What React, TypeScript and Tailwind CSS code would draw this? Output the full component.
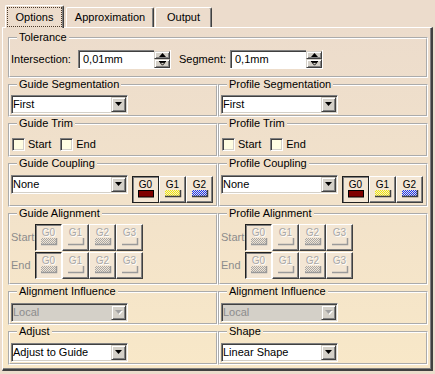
import React from 'react';

type Swatch = 'red' | 'yellow' | 'blue' | 'gray' | 'none';
type Frame = 'raised' | 'pressed' | 'active';

function SwatchIcon({ kind, muted = false }: { kind: Swatch; muted?: boolean }) {
  if (kind === 'red') {
    return (
      <svg width="18" height="8" viewBox="0 0 18 8">
        <rect x="1.5" y="0.5" width="15" height="6.5" fill="#800000" stroke="#000" />
      </svg>
    );
  }
  const dot = kind === 'yellow' ? '#f4ec00' : kind === 'blue' ? '#1030ff' : '#a8a8a8';
  const line = muted ? '#9a9a9a' : '#404040';
  return (
    <svg width="18" height="8" viewBox="0 0 18 8">
      <defs>
        <pattern id={`dots-${kind}`} width="2" height="2" patternUnits="userSpaceOnUse">
          <rect width="1" height="1" fill={dot} />
          <rect x="1" y="1" width="1" height="1" fill={dot} />
        </pattern>
      </defs>
      {kind !== 'none' && <rect x="1" y="0" width="15" height="6" fill={`url(#dots-${kind})`} />}
      <polyline points="16.5,0 16.5,6.5 1,6.5" fill="none" stroke={line} strokeWidth="1.5" />
    </svg>
  );
}

function GButton({ label, kind, frame = 'raised', muted = false }: { label: string; kind: Swatch; frame?: Frame; muted?: boolean }) {
  const frameCls =
    frame === 'active'
      ? 'border-[#202020] shadow-[inset_1px_1px_0_#808080]'
      : frame === 'pressed'
        ? 'border-t-[#202020] border-l-[#202020] border-r-white border-b-white shadow-[inset_1px_1px_0_#808080]'
        : 'border-t-white border-l-white border-r-[#404040] border-b-[#404040] shadow-[inset_-1px_-1px_0_#808080]';
  return (
    <div className={`flex h-[27px] w-[27px] flex-col items-center border bg-[#f3e6d4] pt-[2px] ${frameCls}`}>
      <span className={`text-[10px] leading-[11px] ${muted ? 'text-[#a8a8a8] [text-shadow:1px_1px_0_#fff]' : 'text-black'}`}>
        {label}
      </span>
      <span className="flex">
        <SwatchIcon kind={kind} muted={muted} />
      </span>
    </div>
  );
}

function Combo({ value, disabled = false }: { value: string; disabled?: boolean }) {
  return (
    <div
      className={`flex h-[19px] w-[117px] border border-t-[#808080] border-l-[#808080] border-r-white border-b-white p-[1px] shadow-[inset_1px_1px_0_#404040,inset_-1px_-1px_0_#d4d0c8] ${
        disabled ? 'bg-[#d4d0c8]' : 'bg-white'
      }`}
    >
      <span className={`flex flex-1 items-center ${disabled ? 'text-[#8c8c8c]' : 'text-black'}`}>{value}</span>
      <span className="flex w-[15px] items-center justify-center border border-t-[#d4d0c8] border-l-[#d4d0c8] border-r-[#404040] border-b-[#404040] bg-[#d4d0c8] shadow-[inset_1px_1px_0_white,inset_-1px_-1px_0_#808080]">
        <svg width="8" height="5" viewBox="0 0 8 5">
          {disabled && <polygon points="1,1 8,1 4.5,5" fill="#fff" />}
          <polygon points="0,0 7,0 3.5,4" fill={disabled ? '#a0a0a0' : '#000'} />
        </svg>
      </span>
    </div>
  );
}

function Check({ label }: { label: string }) {
  return (
    <label className="flex items-center gap-[3px]">
      <span className="h-[13px] w-[13px] border border-t-[#808080] border-l-[#808080] border-r-white border-b-white bg-[#fffde2] shadow-[inset_1px_1px_0_#404040,inset_-1px_-1px_0_#d4d0c8]" />
      {label}
    </label>
  );
}

function Spinner() {
  const btn =
    'flex flex-1 items-center justify-center border border-t-[#d4d0c8] border-l-[#d4d0c8] border-r-[#404040] border-b-[#404040] bg-[#d4d0c8] shadow-[inset_1px_1px_0_white,inset_-1px_-1px_0_#808080]';
  return (
    <div className="flex h-[17px] w-[16px] flex-col">
      <span className={btn}>
        <svg width="7" height="4" viewBox="0 0 7 4">
          <polygon points="0,4 7,4 3.5,0" fill="#000" />
        </svg>
      </span>
      <span className={btn}>
        <svg width="7" height="5" viewBox="0 0 7 5">
          <line x1="0" y1="0.5" x2="7" y2="0.5" stroke="#000" />
          <polygon points="1,1.5 6,1.5 3.5,4.2" fill="none" stroke="#000" strokeWidth="0.9" />
        </svg>
      </span>
    </div>
  );
}

function Field({ value }: { value: string }) {
  return (
    <div className="flex h-[19px] items-center border-r border-b border-r-white border-b-white">
      <span className="flex h-full w-[76px] items-center border-t border-l border-t-[#808080] border-l-[#808080] bg-white pl-[4px] shadow-[inset_1px_1px_0_#404040]">
        {value}
      </span>
      <Spinner />
    </div>
  );
}

function Group({ title, className, children }: { title: string; className: string; children: React.ReactNode }) {
  return (
    <fieldset className={`min-w-0 border-2 border-white px-[1px] [border-style:groove] ${className}`}>
      <legend className="ml-[6px] px-[2px] leading-[13px]">{title}</legend>
      {children}
    </fieldset>
  );
}

function AlignRow({ label, className }: { label: string; className?: string }) {
  return (
    <div className={`flex items-center ${className ?? ''}`}>
      <span className="w-[24px] text-[#8c8c8c]">{label}</span>
      <div className="flex">
        <GButton label="G0" kind="gray" frame="pressed" muted />
        <GButton label="G1" kind="none" muted />
        <GButton label="G2" kind="gray" muted />
        <GButton label="G3" kind="none" muted />
      </div>
    </div>
  );
}

export default function App() {
  const sides = ['Guide', 'Profile'] as const;

  return (
    <div className="h-[374px] w-[435px] overflow-hidden bg-[#ecdccc] font-['Liberation_Sans',Arial,sans-serif] text-[11px] leading-[13px] text-black">
      {/* tabs */}
      <div className="flex h-[27px] items-end pl-[5px]">
        <div className="relative z-10 -mb-px flex h-[23px] w-[59px] rounded-t-[2px] border-t border-l border-r border-t-white border-l-white border-r-[#404040] bg-[#ecdccc] p-[1px] shadow-[inset_-1px_0_0_#808080]">
          <div className="flex flex-1 items-center justify-center border border-dotted border-[#4a3a2a] pt-[1px]">Options</div>
        </div>
        <div className="ml-[2px] flex h-[20px] w-[88px] items-center justify-center rounded-t-[2px] border-t border-l border-r border-t-white border-l-white border-r-[#404040] shadow-[inset_-1px_0_0_#808080]">
          Approximation
        </div>
        <div className="ml-[1px] flex h-[20px] w-[57px] items-center justify-center rounded-t-[2px] border-t border-l border-r border-t-white border-l-white border-r-[#404040] shadow-[inset_-1px_0_0_#808080]">
          Output
        </div>
      </div>

      {/* panel */}
      <div className="ml-[2px] w-[431px] border-t border-l border-r-2 border-b-2 border-t-white border-l-white border-r-[#404040] border-b-[#404040] bg-linear-to-b from-[#ecdccc] to-[#f8e8c8] pt-[3px] pr-[3px] pb-[4px] pl-[5px] shadow-[inset_-1px_-1px_0_#808080]">
        <Group title="Tolerance" className="pt-[6px] pb-[7px]">
          <div className="flex items-center">
            <span className="w-[67px]">Intersection:</span>
            <Field value="0,01mm" />
            <span className="ml-[8px] w-[51px]">Segment:</span>
            <Field value="0,1mm" />
          </div>
        </Group>

        <div className="grid grid-cols-2">
          {sides.map((s) => (
            <Group key={s + 'seg'} title={`${s} Segmentation`} className="pt-[4px] pb-[1px]">
              <Combo value="First" />
            </Group>
          ))}
          {sides.map((s) => (
            <Group key={s + 'trim'} title={`${s} Trim`} className="pt-[8px] pb-[4px]">
              <div className="ml-[1px] flex items-center gap-[9px]">
                <Check label="Start" />
                <Check label="End" />
              </div>
            </Group>
          ))}
          {sides.map((s) => (
            <Group key={s + 'coup'} title={`${s} Coupling`} className="pt-[5px] pb-[2px]">
              <div className="flex items-start">
                <Combo value="None" />
                <div className="mt-[1px] ml-[4px] flex">
                  <GButton label="G0" kind="red" frame="active" />
                  <GButton label="G1" kind="yellow" />
                  <GButton label="G2" kind="blue" />
                </div>
              </div>
            </Group>
          ))}
          {sides.map((s) => (
            <Group key={s + 'align'} title={`${s} Alignment`} className="pt-[4px] pb-[4px]">
              <AlignRow label="Start" />
              <AlignRow label="End" className="mt-[1px]" />
            </Group>
          ))}
          {sides.map((s) => (
            <Group key={s + 'infl'} title="Alignment Influence" className="pt-[5px] pb-[1px]">
              <Combo value="Local" disabled />
            </Group>
          ))}
          <Group title="Adjust" className="pt-[5px] pb-[1px]">
            <Combo value="Adjust to Guide" />
          </Group>
          <Group title="Shape" className="pt-[5px] pb-[1px]">
            <Combo value="Linear Shape" />
          </Group>
        </div>
      </div>
    </div>
  );
}
